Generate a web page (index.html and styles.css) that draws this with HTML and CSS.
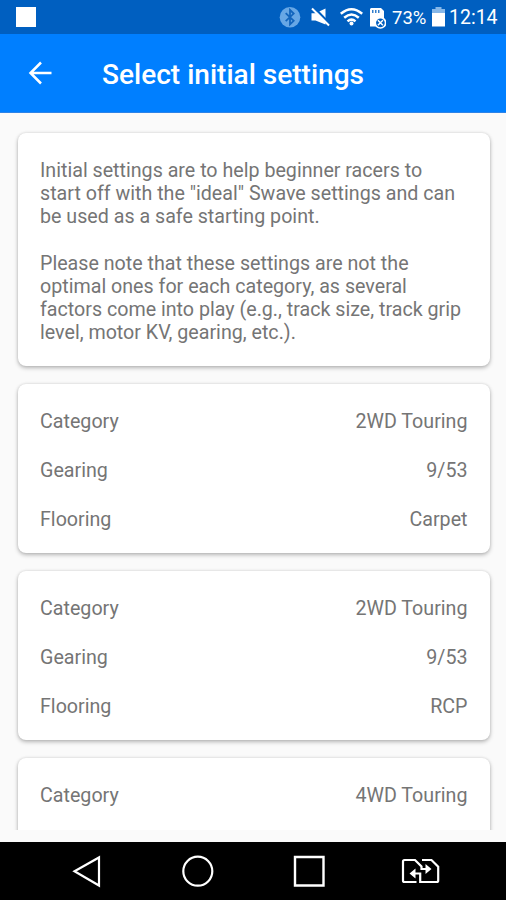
FILE: index.html
```html
<!DOCTYPE html>
<html lang="en">
<head>
<meta charset="utf-8">
<title>Select initial settings</title>
<link rel="stylesheet" href="styles.css">
</head>
<body>
<div class="screen">
  <div class="status">
    <span class="notice"></span>
    <svg class="status-icons" width="107" height="34" viewBox="0 0 107 34">
      <circle cx="11" cy="17.200" r="10.300" fill="#67a7e5"/>
      <path d="M6.700 13.200 L14.700 20.800 L11 24.400 V10 L14.700 13.600 L6.700 21.200" fill="none" stroke="#1265bd" stroke-width="1.800"/>
      <path d="M32.500 13.300 H36.500 L46.500 8.500 V24.500 L36.500 20.500 H32.500 Z" fill="#fff"/>
      <path d="M35 7.500 L51.500 24.500" stroke="#005fc0" stroke-width="2.500"/>
      <path d="M33 8.500 L50 25.500" stroke="#fff" stroke-width="2"/>
      <g fill="none" stroke="#fff" stroke-width="2.500">
        <path d="M61.800 13.800 Q72.500 4.600 83.200 13.800"/>
        <path d="M65.200 17.800 Q72.500 11.300 79.800 17.800"/>
        <path d="M68.500 21.400 Q72.500 17.800 76.500 21.400"/>
      </g>
      <circle cx="72.500" cy="23.600" r="2" fill="#fff"/>
      <path d="M92 8 H102 L105 11 V26.500 H91 V9 Z" fill="#fff"/>
      <path d="M93.800 10 V13 M96.800 10 V13 M99.800 10 V13" stroke="#005fc0" stroke-width="1.200"/>
      <circle cx="101.400" cy="22.800" r="5.200" fill="#005fc0" stroke="#fff" stroke-width="1.700"/>
      <path d="M98.900 20.300 L103.900 25.300 M103.900 20.300 L98.900 25.300" stroke="#fff" stroke-width="1.500"/>
    </svg>
    <span class="percent">73%</span>
    <svg class="battery" width="13" height="20" viewBox="0 0 13 20">
      <path d="M3.500 0 H9.500 V2 H13 V7 H0 V2 H3.500 Z" fill="#86b7e8"/>
      <path d="M0 6 H13 V19.500 H0 Z" fill="#fff"/>
    </svg>
    <span class="clock">12:14</span>
  </div>
  <div class="appbar">
    <svg class="back" width="24" height="24" viewBox="0 0 24 24" fill="none" stroke="#fff" stroke-width="2.500">
      <path d="M23.500 12 H2.500 M13 1.500 L2.500 12 L13 22.500"/>
    </svg>
    <h1>Select initial settings</h1>
  </div>
  <div class="list">
    <div class="card intro">
      <p>Initial settings are to help beginner racers to<br>start off with the "ideal" Swave settings and can<br>be used as a safe starting point.</p>
      <p>Please note that these settings are not the<br>optimal ones for each category, as several<br>factors come into play (e.g., track size, track grip<br>level, motor KV, gearing, etc.).</p>
    </div>
    <div class="card">
      <div class="row"><span>Category</span><span>2WD Touring</span></div>
      <div class="row"><span>Gearing</span><span>9/53</span></div>
      <div class="row"><span>Flooring</span><span>Carpet</span></div>
    </div>
    <div class="card">
      <div class="row"><span>Category</span><span>2WD Touring</span></div>
      <div class="row"><span>Gearing</span><span>9/53</span></div>
      <div class="row"><span>Flooring</span><span>RCP</span></div>
    </div>
    <div class="card">
      <div class="row"><span>Category</span><span>4WD Touring</span></div>
      <div class="row"></div>
      <div class="row"></div>
    </div>
  </div>
  <div class="nav">
    <svg width="506" height="58" viewBox="0 0 506 58" fill="none" stroke="#fff" stroke-width="2.200">
      <path d="M99 15.500 V43.500 L74.500 29.300 Z"/>
      <circle cx="197.800" cy="29.200" r="14.500"/>
      <path d="M295 15 H323.500 V43.500 H295 Z" stroke-width="2.400"/>
      <path d="M416.500 40 H404.500 Q403 40 403 38.500 V19.500 Q403 18 404.500 18 H415 L421.500 24.500 V27 H429"/>
      <path d="M422 18 H431.500 L438.200 24.700 V38.500 Q438.200 40 436.700 40 H420.200 V31.500 H412"/>
      <path d="M425.500 22 L431.500 27 L425.500 32 Z M415.500 26.500 L409.500 31.500 L415.500 36.500 Z" fill="#fff" stroke="none"/>
    </svg>
  </div>
</div>
</body>
</html>
```
FILE: styles.css
```css
* { box-sizing: border-box; }
body {
  margin: 0;
  background: #fafafa;
  font-family: Roboto, "Liberation Sans", sans-serif;
}
.screen {
  width: 506px;
  height: 900px;
  display: flex;
  flex-direction: column;
  overflow: hidden;
}
.status {
  flex: none;
  height: 34px;
  padding: 0 9px 0 16px;
  display: flex;
  align-items: center;
  background: #005fc0;
  color: #fff;
}
.notice {
  width: 20px;
  height: 20px;
  background: #fff;
}
.status-icons { margin-left: auto; }
.percent {
  width: 38px;
  margin-left: 6px;
  padding-top: 1px;
  font-size: 18.500px;
  letter-spacing: 0;
}
.battery { margin: 0 4px 0 2px; }
.clock {
  width: 48px;
  padding-top: 1px;
  font-size: 19.500px;
  letter-spacing: 0;
  white-space: nowrap;
}
.appbar {
  flex: none;
  height: 79px;
  padding: 0 0 0 28px;
  display: flex;
  align-items: center;
  background: #007fff;
  border-bottom: 1px solid #2d83e8;
}
h1 {
  margin: 4px 0 0 50px;
  color: #fff;
  font-size: 28.050px;
  line-height: 32px;
  font-weight: 500;
}
.list {
  flex: none;
  height: 717px;
  padding: 19.500px 16px 0 17.500px;
  overflow: hidden;
  color: #757575;
  font-size: 19.660px;
  line-height: 23.200px;
}
.card {
  height: 169.500px;
  margin-bottom: 17.500px;
  padding: 26.500px 22.500px 0;
  background: #fff;
  border-radius: 8px;
  box-shadow: 0 2px 4px rgba(0, 0, 0, .26), 0 0 3px rgba(0, 0, 0, .12);
}
.intro { height: 233.500px; white-space: nowrap; }
.intro p { margin: 0 0 23.200px; }
.row {
  height: 49.200px;
  display: flex;
  justify-content: space-between;
}
.nav {
  flex: none;
  height: 58px;
  margin-top: 12px;
  background: #000;
}
.nav svg { display: block; }
```
